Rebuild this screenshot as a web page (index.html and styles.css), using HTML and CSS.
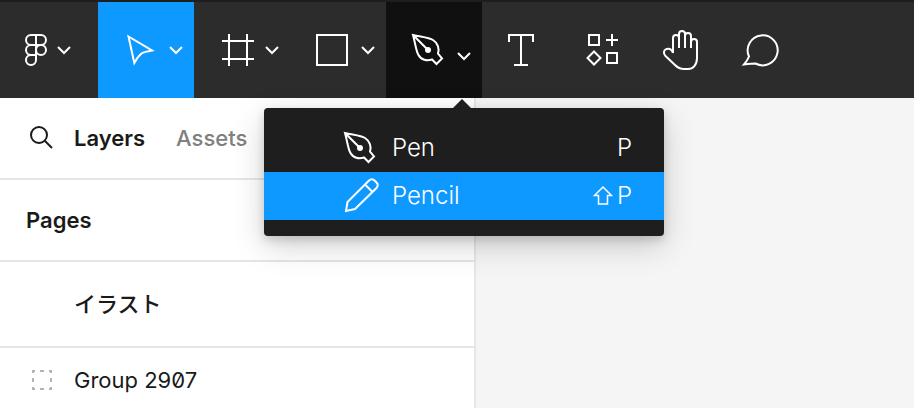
FILE: index.html
```html
<!DOCTYPE html>
<html lang="ja">
<head>
    <meta charset="UTF-8">
    <meta name="viewport" content="width=device-width, initial-scale=1.0">
    <title>Design Editor</title>

    <link rel="stylesheet" href="styles.css">
</head>
<body>
    <!-- Top toolbar -->
    <header class="toolbar">
        <button class="tool tool-main" aria-label="Main menu">
            <svg class="icon" width="32" height="48" viewBox="0 0 32 48">
                <path d="M16 9H11a5 5 0 0 0 0 10H16zM16 9H21a5 5 0 0 1 0 10H16zM16 19H11a5 5 0 0 0 0 10H16zM16 29H11a5 5 0 1 0 5 5z"/>
                <circle cx="21" cy="24" r="5"/>
            </svg>
            <svg class="icon" width="24" height="24" viewBox="0 0 24 24"><path d="M6 9L12 15L18 9"/></svg>
        </button>

        <button class="tool selected" aria-label="Move">
            <svg class="icon" width="48" height="48" viewBox="0 0 48 48">
                <path d="M12.5 10.5L36 24.5C30 25.5 28 26 25.5 27.5C23 29.5 21 32 18.3 37z"/>
            </svg>
            <svg class="icon" width="24" height="24" viewBox="0 0 24 24"><path d="M6 9L12 15L18 9"/></svg>
        </button>

        <button class="tool" aria-label="Frame">
            <svg class="icon" width="48" height="48" viewBox="0 0 48 48">
                <path d="M17 8V40M35 8V40M10 15H42M10 33H42"/>
            </svg>
            <svg class="icon" width="24" height="24" viewBox="0 0 24 24"><path d="M6 9L12 15L18 9"/></svg>
        </button>

        <button class="tool" aria-label="Rectangle">
            <svg class="icon" width="48" height="48" viewBox="0 0 48 48">
                <rect x="9" y="9" width="30" height="30"/>
            </svg>
            <svg class="icon" width="24" height="24" viewBox="0 0 24 24"><path d="M6 9L12 15L18 9"/></svg>
        </button>

        <div class="tool-group">
            <button class="tool open" aria-label="Drawing tools" aria-expanded="true">
                <svg class="icon" width="48" height="48" viewBox="0 0 48 48">
                    <path d="M9 9C18 11 25 11.5 29 14C34 17 35.5 23 34 27.5L38 32.5L32.5 38L28 33.5C23 35 17 34 14.5 29C12 25 11.5 18 9 9zM9 9L23 23"/>
                    <circle class="solid" cx="24" cy="24" r="3"/>
                </svg>
                <svg class="icon" width="24" height="36" viewBox="0 0 24 36"><path d="M6 21L12 27L18 21"/></svg>
            </button>

            <!-- Drawing tools dropdown -->
            <div class="menu" role="menu">
                <button class="menu-item" role="menuitem">
                    <svg class="icon" width="48" height="48" viewBox="0 0 48 48">
                        <path d="M9 9C18 11 25 11.5 29 14C34 17 35.5 23 34 27.5L38 32.5L32.5 38L28 33.5C23 35 17 34 14.5 29C12 25 11.5 18 9 9zM9 9L23 23"/>
                        <circle class="solid" cx="24" cy="24" r="3"/>
                    </svg>
                    <span>Pen</span>
                    <span class="shortcut">P</span>
                </button>
                <button class="menu-item active" role="menuitem">
                    <svg class="icon" width="48" height="48" viewBox="0 0 48 48">
                        <path d="M10 39L11.5 30L33 8.5Q36 6 38.5 8.5L40.5 10.5Q43 13 40.5 16L19 37zM29 12.5L36.5 20"/>
                    </svg>
                    <span>Pencil</span>
                    <span class="shortcut">
                        <svg class="icon shift" width="20" height="20" viewBox="0 0 20 20"><path d="M10 1L18.500 9.500H14.500V18H5.500V9.500H1.500z"/></svg>
                        P
                    </span>
                </button>
            </div>
        </div>

        <button class="tool tool-single" aria-label="Text">
            <svg class="icon" width="48" height="48" viewBox="0 0 48 48">
                <path d="M11 16V9H35V16M23 9V39M16 39H30"/>
            </svg>
        </button>

        <button class="tool tool-single" aria-label="Resources">
            <svg class="icon" width="48" height="48" viewBox="0 0 48 48">
                <path d="M11 9H21V19H11zM29 27H39V37H29zM34 8V20M28 14H40M16 25.5L22.5 32L16 38.5L9.5 32z"/>
            </svg>
        </button>

        <button class="tool tool-single" aria-label="Hand">
            <svg class="icon" width="48" height="48" viewBox="0 0 48 48">
                <path d="M15 27V12a3 3 0 0 1 6 0V22M21 12V8a3 3 0 0 1 6 0V22M27 10a3 3 0 0 1 6 0V22M33 16a3 3 0 0 1 6 0V32C39 39 35 43 30 43H26C22 43 19.500 41.500 17 39L7.500 30C5 27.500 5.500 24 8.500 23C12 22 14 24 15 27"/>
            </svg>
        </button>

        <button class="tool tool-single" aria-label="Comment">
            <svg class="icon" width="48" height="48" viewBox="0 0 48 48">
                <path d="M6 38.500C8.500 35.500 10 33 11 30.500A15 15 0 1 1 17.500 37.500C14 37.500 10 38 6 38.500z"/>
            </svg>
        </button>
    </header>

    <main class="workspace">
        <!-- Left panel -->
        <aside class="sidebar">
            <div class="row tabs">
                <button class="search" aria-label="Search">
                    <svg class="icon" width="32" height="32" viewBox="0 0 32 32">
                        <circle cx="13" cy="13" r="8"/>
                        <path d="M18.500 18.500L26 26"/>
                    </svg>
                </button>
                <button class="tab current">Layers</button>
                <button class="tab">Assets</button>
            </div>
            <h2 class="row heading">Pages</h2>
            <div class="row page">イラスト</div>
            <div class="row layer">
                <svg class="icon group-icon" width="32" height="32" viewBox="0 0 32 32">
                    <path d="M7 9V7H9M14 7H18M23 7H25V9M25 14V18M25 23V25H23M18 25H14M9 25H7V23M7 18V14"/>
                </svg>
                <span>Group 2907</span>
            </div>
        </aside>

        <section class="canvas"></section>
    </main>
</body>
</html>
```

FILE: styles.css
```css
* {
    margin: 0;
    padding: 0;
    box-sizing: border-box;
}

body {
    display: flex;
    flex-direction: column;
    height: 100vh;
    overflow: hidden;
    background: #f5f5f5;
    color: #1a1a1a;
    font-family: Inter, "Noto Sans CJK JP", sans-serif;
    font-size: 22px;
    line-height: 32px;
}

button {
    border: none;
    background: none;
    color: inherit;
    font: inherit;
    cursor: pointer;
}

.icon {
    display: block;
    flex-shrink: 0;
    fill: none;
    stroke: currentColor;
    stroke-width: 2;
}

.icon .solid {
    fill: currentColor;
    stroke: none;
}

/* Toolbar */
.toolbar {
    display: flex;
    flex-shrink: 0;
    background: #2c2c2c;
    border-top: 2px solid #1e1e1e;
    color: #fff;
}

.tool {
    display: flex;
    align-items: center;
    width: 96px;
    height: 96px;
    padding-left: 18px;
}

.tool-main {
    width: 98px;
    padding-left: 20px;
}

.tool-single {
    width: 80px;
    padding-left: 16px;
}

.tool.selected {
    background: #0d99ff;
}

.tool.open {
    background: #101010;
}

.tool-group {
    position: relative;
}

/* Dropdown menu */
.menu {
    position: absolute;
    top: 106px;
    right: -182px;
    z-index: 1;
    width: 400px;
    padding: 16px 0;
    background: #1e1e1e;
    border-radius: 4px;
    box-shadow: 0 10px 32px rgba(0, 0, 0, 0.18), 0 4px 10px rgba(0, 0, 0, 0.15);
}

/* Arrow pointing at the open tool */
.menu::before {
    content: "";
    position: absolute;
    bottom: 100%;
    left: 189px;
    border: 9px solid transparent;
    border-top: none;
    border-bottom-color: #1e1e1e;
}

.menu-item {
    display: flex;
    align-items: center;
    gap: 8px;
    width: 100%;
    height: 48px;
    padding: 0 32px 0 72px;
    font-size: 24px;
    font-weight: 300;
}

.menu-item.active {
    background: #0d99ff;
}

.shortcut {
    display: flex;
    align-items: center;
    gap: 4px;
    margin-left: auto;
}

.shift {
    stroke-width: 1.5;
}

/* Left panel */
.workspace {
    display: flex;
    flex: 1;
    min-height: 0;
}

.sidebar {
    width: 52.1%;
    background: #fff;
    border-right: 2px solid #e6e6e6;
}

.canvas {
    flex: 1;
    background: #f5f5f5;
}

.row {
    display: flex;
    align-items: center;
    padding: 24px 26px;
    border-bottom: 2px solid #e6e6e6;
}

.tabs {
    gap: 31px;
}

.search {
    margin-right: -15px;
}

.tab {
    color: #808080;
    font-weight: 500;
}

.tab.current {
    color: #1a1a1a;
    font-weight: 600;
}

.heading {
    font-size: 22px;
    font-weight: 600;
}

.page {
    padding: 26px 26px 26px 74px;
    font-weight: 500;
}

.layer {
    gap: 16px;
    padding: 16px 26px;
    border-bottom: none;
    font-feature-settings: "zero";
}

.group-icon {
    color: #b3b3b3;
}
```
